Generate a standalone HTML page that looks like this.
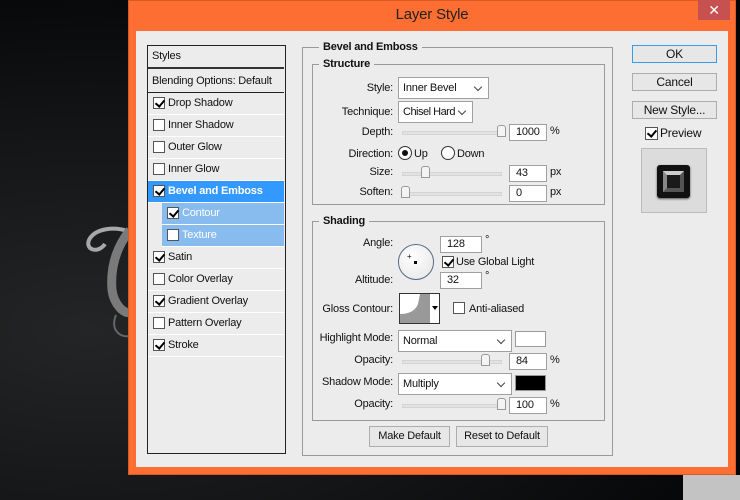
<!DOCTYPE html>
<html><head><style>
*{margin:0;padding:0;box-sizing:border-box}
body{width:740px;height:500px;overflow:hidden;position:relative;background:#0a0c0d;font-family:"Liberation Sans",sans-serif;font-size:11px;color:#111;letter-spacing:-0.2px}
.a{position:absolute}
.bg{left:0;top:0;width:740px;height:500px;background:radial-gradient(ellipse at 90px 330px,#232526 0,#121415 45%,#040506 80%)}
.dlg{left:128px;top:0;width:608px;height:475px;background:#fd6e33;border:1px solid #d85a25}
.inner{left:136px;top:31px;width:592px;height:436px;background:#ececec}
.cb{position:absolute;width:12px;height:12px;border:1px solid #555;background:#fff}
.cb.on::after{content:"";position:absolute;left:3px;top:0px;width:4px;height:7px;border:solid #000;border-width:0 2px 2px 0;transform:rotate(40deg)}
.row{position:absolute;left:0;width:136px;height:22px;border-bottom:1px solid #fff;line-height:21px}
.row .cb{left:5px;top:4px}
.row span{position:absolute;left:20px}
.grp{border:1px solid #9a9a9a}
.lg{position:absolute;background:#ececec;font-weight:bold;padding:0 4px;top:-7px;left:15px;line-height:12px}
.lbl{position:absolute;text-align:right;width:90px}
.inp{position:absolute;height:17px;background:#fff;border:1px solid #a0a0a0;padding-left:6px;line-height:15px}
.sel{position:absolute;height:22px;background:#fff;border:1px solid #a0a0a0;padding-left:4px;line-height:20px}
.sel::after{content:"";position:absolute;right:7px;top:6px;width:5px;height:5px;border:solid #444;border-width:0 1.5px 1.5px 0;transform:rotate(45deg)}
.sl{position:absolute;height:4px;background:#e2e2e2;border:1px solid #d4d4d4}
.th{position:absolute;top:-7px;width:9px;height:12px;background:#f4f4f4;border:1px solid #999;border-radius:3px 3px 0 0}
.btn{position:absolute;height:18px;background:#e7e7e7;border:1px solid #adadad;text-align:center;line-height:16px;font-size:12px}
</style></head><body>
<div class="a bg"></div>
<svg class="a" style="left:80px;top:220px" width="50" height="120" viewBox="0 0 50 120">
<path d="M50 12 C35 6 15 8 9 20 C5 30 18 34 25 24" fill="none" stroke="#a8a8a8" stroke-width="4"/>
<path d="M50 10 C38 25 30 45 32 70 C34 85 45 95 50 92" fill="none" stroke="#7a7a7a" stroke-width="9"/>
<path d="M36 95 C30 110 40 118 50 116" fill="none" stroke="#666" stroke-width="2"/>
</svg>
<div class="a dlg"></div>
<div class="a" style="left:698px;top:0;width:32px;height:20px;background:#c75050;color:#fff;text-align:center;line-height:20px;font-size:14px">✕</div>
<div class="a" style="left:128px;top:6px;width:608px;text-align:center;font-size:15px;color:#222">Layer Style</div>
<div class="a inner"></div>
<div class="a" style="left:147px;top:45px;width:139px;height:409px;border:1px solid #222;background:#ececec">
 <div class="row" style="top:0;height:23px;border-bottom:2px solid #333"><span style="left:4px">Styles</span></div>
 <div class="row" style="top:25px;height:22px;border-bottom:1px solid #222"><span style="left:4px">Blending Options: Default</span></div>
 <div class="row" style="top:47px"><div class="cb on"></div><span>Drop Shadow</span></div>
 <div class="row" style="top:69px"><div class="cb"></div><span>Inner Shadow</span></div>
 <div class="row" style="top:91px"><div class="cb"></div><span>Outer Glow</span></div>
 <div class="row" style="top:113px"><div class="cb"></div><span>Inner Glow</span></div>
 <div class="row" style="top:135px;background:#3399ff;color:#fff;font-weight:bold"><div class="cb on"></div><span>Bevel and Emboss</span></div>
 <div class="row" style="top:157px;left:14px;width:122px;background:#88bbee;color:#fff"><div class="cb on"></div><span>Contour</span></div>
 <div class="row" style="top:179px;left:14px;width:122px;background:#88bbee;color:#fff"><div class="cb"></div><span>Texture</span></div>
 <div class="row" style="top:201px"><div class="cb on"></div><span>Satin</span></div>
 <div class="row" style="top:223px"><div class="cb"></div><span>Color Overlay</span></div>
 <div class="row" style="top:245px"><div class="cb on"></div><span>Gradient Overlay</span></div>
 <div class="row" style="top:267px"><div class="cb"></div><span>Pattern Overlay</span></div>
 <div class="row" style="top:289px"><div class="cb on"></div><span>Stroke</span></div>
</div>
<div class="a grp" style="left:302px;top:47px;width:311px;height:409px"><div class="lg" style="left:16px">Bevel and Emboss</div></div>
<div class="a grp" style="left:312px;top:64px;width:293px;height:141px"><div class="lg" style="left:6px">Structure</div></div>
<div class="lbl" style="left:303px;top:82px">Style:</div>
<div class="sel" style="left:398px;top:77px;width:91px">Inner Bevel</div>
<div class="lbl" style="left:303px;top:106px">Technique:</div>
<div class="sel" style="left:398px;top:101px;width:75px;letter-spacing:-0.5px">Chisel Hard</div>
<div class="lbl" style="left:303px;top:126px">Depth:</div>
<div class="sl" style="left:402px;top:131px;width:100px"><div class="th" style="left:94px"></div></div>
<div class="inp" style="left:509px;top:124px;width:38px">1000</div><div class="a" style="left:550px;top:125px">%</div>
<div class="lbl" style="left:303px;top:148px">Direction:</div>
<div class="a" style="left:398px;top:146px;width:14px;height:14px;border:1px solid #333;border-radius:50%;background:#fff"><div class="a" style="left:3px;top:3px;width:6px;height:6px;border-radius:50%;background:#111"></div></div>
<div class="a" style="left:414px;top:148px">Up</div>
<div class="a" style="left:441px;top:146px;width:14px;height:14px;border:1px solid #333;border-radius:50%;background:#fff"></div>
<div class="a" style="left:457px;top:148px">Down</div>
<div class="lbl" style="left:303px;top:166px">Size:</div>
<div class="sl" style="left:402px;top:172px;width:100px"><div class="th" style="left:18px"></div></div>
<div class="inp" style="left:509px;top:165px;width:38px">43</div><div class="a" style="left:550px;top:166px">px</div>
<div class="lbl" style="left:303px;top:186px">Soften:</div>
<div class="sl" style="left:402px;top:192px;width:100px"><div class="th" style="left:-2px"></div></div>
<div class="inp" style="left:509px;top:185px;width:38px">0</div><div class="a" style="left:550px;top:186px">px</div>
<div class="a grp" style="left:312px;top:221px;width:293px;height:200px"><div class="lg" style="left:6px">Shading</div></div>
<div class="lbl" style="left:303px;top:237px">Angle:</div>
<div class="a" style="left:398px;top:244px;width:36px;height:36px;border:1.5px solid #556a8a;border-radius:50%;background:radial-gradient(circle at 40% 35%,#fff,#e4e4e4)"><div class="a" style="left:15px;top:16px;width:3px;height:3px;background:#000"></div><div class="a" style="left:8px;top:8px;font-size:8px;line-height:8px">+</div></div>
<div class="inp" style="left:440px;top:236px;width:42px">128</div><div class="a" style="left:485px;top:234px">°</div>
<div class="cb on" style="left:442px;top:256px"></div><div class="a" style="left:456px;top:256px">Use Global Light</div>
<div class="lbl" style="left:303px;top:274px">Altitude:</div>
<div class="inp" style="left:440px;top:272px;width:42px">32</div><div class="a" style="left:485px;top:270px">°</div>
<div class="lbl" style="left:303px;top:303px">Gloss Contour:</div>
<div class="a" style="left:399px;top:293px;width:41px;height:31px;border:1px solid #333;background:#fff">
<svg class="a" style="left:0;top:0" width="29" height="29"><path d="M0 29 L0 20 Q14 20 18 10 L20 0 L29 0 L29 29Z" fill="#999"/></svg>
<div class="a" style="left:29px;top:0;width:10px;height:29px;border-left:1px solid #999"><div class="a" style="left:2px;top:12px;border:3px solid transparent;border-top:4px solid #000"></div></div></div>
<div class="cb" style="left:453px;top:302px"></div><div class="a" style="left:469px;top:303px">Anti-aliased</div>
<div class="lbl" style="left:303px;top:332px">Highlight Mode:</div>
<div class="sel" style="left:398px;top:330px;width:114px">Normal</div>
<div class="a" style="left:515px;top:331px;width:31px;height:16px;border:1px solid #999;background:#fff"></div>
<div class="lbl" style="left:303px;top:354px">Opacity:</div>
<div class="sl" style="left:402px;top:360px;width:100px"><div class="th" style="left:78px"></div></div>
<div class="inp" style="left:509px;top:353px;width:38px">84</div><div class="a" style="left:550px;top:354px">%</div>
<div class="lbl" style="left:303px;top:376px">Shadow Mode:</div>
<div class="sel" style="left:398px;top:373px;width:114px">Multiply</div>
<div class="a" style="left:515px;top:375px;width:31px;height:16px;border:1px solid #999;background:#000"></div>
<div class="lbl" style="left:303px;top:398px">Opacity:</div>
<div class="sl" style="left:402px;top:404px;width:100px"><div class="th" style="left:94px"></div></div>
<div class="inp" style="left:509px;top:397px;width:38px">100</div><div class="a" style="left:550px;top:398px">%</div>
<div class="btn" style="left:369px;top:426px;width:81px;height:21px;line-height:19px;font-size:11px">Make Default</div>
<div class="btn" style="left:456px;top:426px;width:92px;height:21px;line-height:19px;font-size:11px">Reset to Default</div>
<div class="btn" style="left:632px;top:45px;width:85px;border-color:#3c9be8">OK</div>
<div class="btn" style="left:632px;top:73px;width:85px">Cancel</div>
<div class="btn" style="left:632px;top:101px;width:85px">New Style...</div>
<div class="cb on" style="left:645px;top:127px;width:13px;height:13px"></div>
<div class="a" style="left:660px;top:126px;font-size:12px">Preview</div>
<div class="a" style="left:641px;top:148px;width:66px;height:65px;background:#dcdcdc;border:1px solid #bbb">
<div class="a" style="left:15px;top:16px;width:33px;height:33px;background:#111;border-radius:3px;box-shadow:0 1px 2px #555">
<div class="a" style="left:6px;top:6px;width:21px;height:21px;border:4px solid #555;border-top-color:#ccc;border-left-color:#888;background:#1a1a1a"></div></div></div>
<div class="a" style="left:683px;top:475px;width:57px;height:25px;background:#c3c3c3"></div>
</body></html>
